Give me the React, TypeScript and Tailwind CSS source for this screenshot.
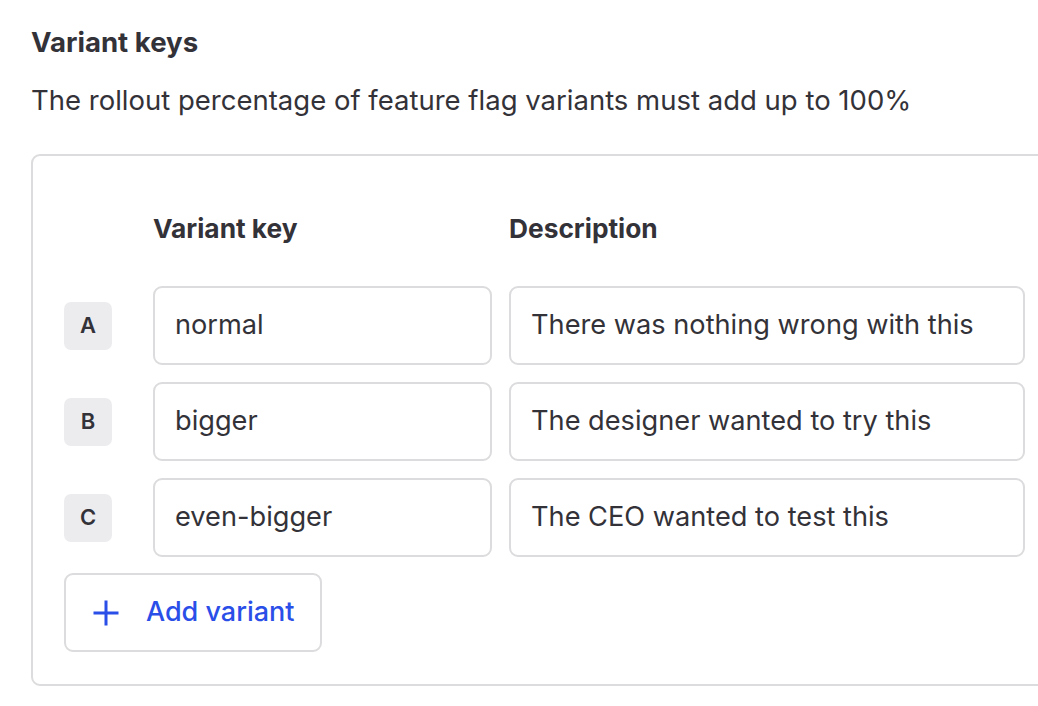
const variants = [
  { letter: 'A', key: 'normal', description: 'There was nothing wrong with this' },
  { letter: 'B', key: 'bigger', description: 'The designer wanted to try this' },
  { letter: 'C', key: 'even-bigger', description: 'The CEO wanted to test this' },
]

const VariantRow = ({ letter, keyName, description }: { letter: string; keyName: string; description: string }) => (
  <div className="flex items-center h-[79px]">
    <div className="w-[48px] h-[48px] rounded-[7px] bg-[#ececef] flex items-center justify-center text-[22px] font-semibold text-[#333238]">
      {letter}
    </div>
    <div className="ml-[41px] w-[339px] h-full border-2 border-[#dcdcde] rounded-[9px] flex items-center px-[20px] text-[27.2px]">
      {keyName}
    </div>
    <div className="ml-[17px] w-[516px] h-full border-2 border-[#dcdcde] rounded-[9px] flex items-center px-[20px] text-[27.2px]">
      {description}
    </div>
  </div>
)

export default function App() {
  return (
    <div
      className="w-[1038px] h-[706px] overflow-hidden bg-white text-[#333238] pl-[31px] pt-[22px]"
      style={{ fontFamily: 'Inter, "Noto Sans", sans-serif' }}
    >
      <h4 className="text-[27.6px] font-bold leading-[40px]">Variant keys</h4>
      <p className="mt-[18px] text-[27.5px] leading-[40px]">
        The rollout percentage of feature flag variants must add up to 100%
      </p>
      <div className="mt-[34px] w-[1100px] border-2 border-[#dcdcde] rounded-[9px] pl-[31px] pt-[32px] pb-[32px]">
        <div className="flex items-center h-[82px] mb-[16px] text-[26.3px] font-bold">
          <span className="ml-[89px] w-[356px]">Variant key</span>
          <span>Description</span>
        </div>
        <div className="flex flex-col gap-[17px]">
          {variants.map((v) => (
            <VariantRow key={v.letter} letter={v.letter} keyName={v.key} description={v.description} />
          ))}
        </div>
        <button className="mt-[16px] h-[79px] w-[258px] border-2 border-[#dcdcde] rounded-[9px] flex items-center pl-[26px] gap-[26px] text-[#2a4ee8] text-[27px] font-medium">
          <svg width="28" height="28" viewBox="0 0 28 28" fill="none" stroke="currentColor" strokeWidth="3">
            <path d="M14 1.5v25M1.5 14h25" />
          </svg>
          Add variant
        </button>
      </div>
    </div>
  )
}
